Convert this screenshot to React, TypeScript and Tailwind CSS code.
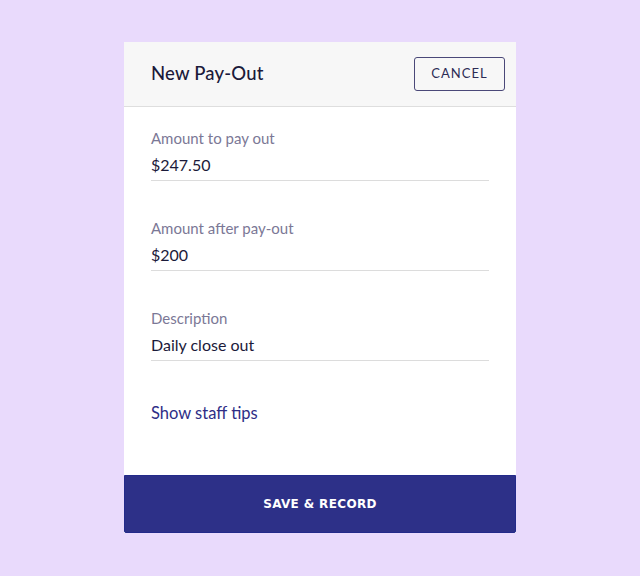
import React from 'react'

const fields = [
  { label: 'Amount to pay out', value: '$247.50' },
  { label: 'Amount after pay-out', value: '$200' },
  { label: 'Description', value: 'Daily close out' },
]

export default function App() {
  return (
    <div
      className="w-[640px] h-[576px] bg-[#e9dafc] pt-[42px]"
      style={{ fontFamily: 'Lato, "Open Sans", sans-serif' }}
    >
      <div className="mx-auto w-[392px] h-[491px] bg-white flex flex-col">
        {/* Header */}
        <div className="h-[65px] bg-[#f7f7f7] border-b border-[#dedede] flex items-center justify-between pl-[27px] pr-[11px]">
          <span className="text-[18.5px] text-[#1b1a3a] font-medium tracking-[0.01em]">New Pay-Out</span>
          <button className="w-[91px] h-[34px] border border-[#4a4878] rounded-[3px] text-[13px] tracking-[0.08em] text-[#2c2b55]">
            CANCEL
          </button>
        </div>

        {/* Fields */}
        <div className="flex-1 pl-[27px] pr-[27px] pt-[22px]">
          {fields.map((f) => (
            <div key={f.label} className="h-[90px]">
              <div className="text-[15px] text-[#7b7896] leading-[18px]">{f.label}</div>
              <div className="mt-[8px] pb-[5px] text-[16px] text-[#1b1a3a] leading-[20px] border-b border-[#dcdcdc]">
                {f.value}
              </div>
            </div>
          ))}
          <div className="mt-[4px] text-[16.5px] text-[#2e2d86] leading-[20px]">Show staff tips</div>
        </div>

        {/* Footer */}
        <button
          className="h-[58px] bg-[#2d3088] border border-[#232a8a] rounded-b-[2px] text-white text-[12px] font-bold tracking-[0.03em]"
          style={{ fontFamily: '"DejaVu Sans", Verdana, sans-serif' }}
        >
          SAVE &amp; RECORD
        </button>
      </div>
    </div>
  )
}
